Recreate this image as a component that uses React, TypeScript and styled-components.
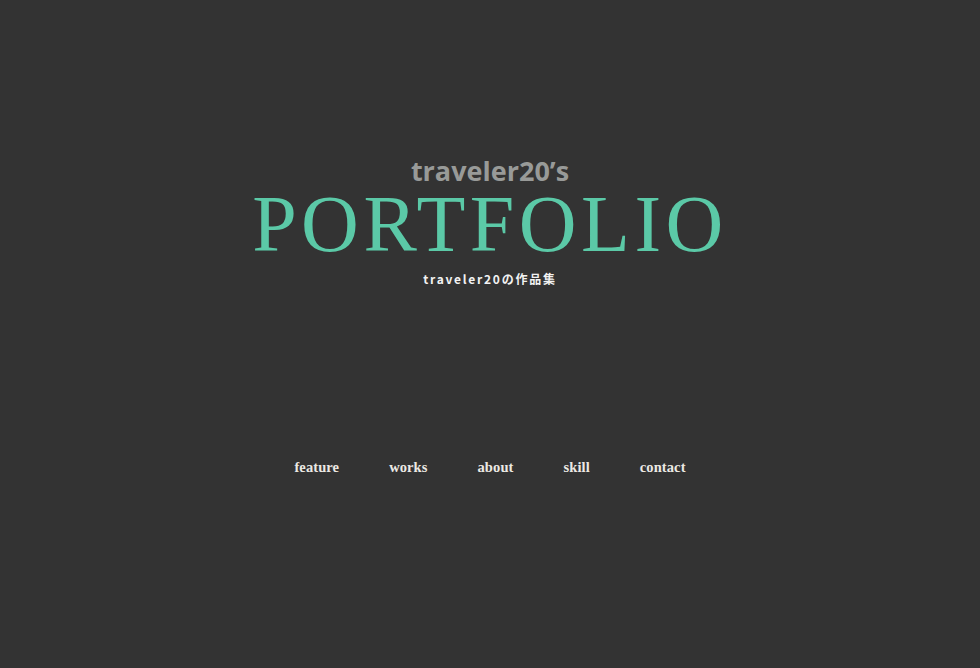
import React from "react";
import styled, { createGlobalStyle } from "styled-components";

const Global = createGlobalStyle`
  html, body { margin: 0; padding: 0; background: #333333; }
  body { font-family: "Open Sans", sans-serif; }
`;

const Page = styled.div`
  width: 980px;
  height: 668px;
  background: #333333;
  display: flex;
  flex-direction: column;
  align-items: center;
  box-sizing: border-box;
  padding-top: 158px;
`;

const Hero = styled.header`
  display: flex;
  flex-direction: column;
  align-items: center;
`;

const Owner = styled.div`
  font-family: "Open Sans", sans-serif;
  font-weight: 700;
  font-size: 27px;
  line-height: 26px;
  color: #989a98;
`;

const Title = styled.h1`
  margin: 0;
  font-family: "Liberation Serif", serif;
  font-weight: 400;
  font-size: 80px;
  line-height: 80px;
  letter-spacing: 4.5px;
  color: #5bc9a7;
`;

const Sub = styled.p`
  margin: 6px 0 0;
  font-family: "Noto Sans CJK JP", sans-serif;
  font-weight: 700;
  font-size: 12px;
  line-height: 18px;
  letter-spacing: 1.75px;
  color: #f2f2f2;
`;

const Nav = styled.nav`
  margin-top: 171px;
  display: flex;
  gap: 50px;
`;

const NavItem = styled.a`
  font-family: "Liberation Serif", serif;
  font-weight: 700;
  font-size: 14.5px;
  letter-spacing: 0.1px;
  color: #ece9e4;
  text-decoration: none;
`;

export default function App() {
  return (
    <>
      <Global />
      <Page>
        <Hero>
          <Owner>traveler20’s</Owner>
          <Title>PORTFOLIO</Title>
          <Sub>traveler20の作品集</Sub>
        </Hero>
        <Nav>
          {["feature", "works", "about", "skill", "contact"].map((n) => (
            <NavItem key={n} href="#">{n}</NavItem>
          ))}
        </Nav>
      </Page>
    </>
  );
}
